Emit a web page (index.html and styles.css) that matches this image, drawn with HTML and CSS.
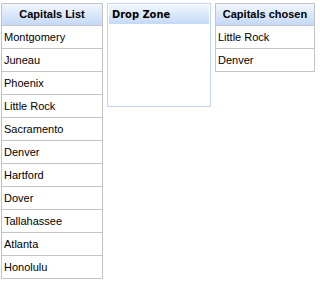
FILE: index.html
```html
<!DOCTYPE html>
<html>
<head>
<meta charset="utf-8">
<link rel="stylesheet" href="styles.css">
</head>
<body>
<div class="board">
  <div class="list list-source">
    <div class="list-head">Capitals List</div>
    <div class="item">Montgomery</div>
    <div class="item">Juneau</div>
    <div class="item">Phoenix</div>
    <div class="item">Little Rock</div>
    <div class="item">Sacramento</div>
    <div class="item">Denver</div>
    <div class="item">Hartford</div>
    <div class="item">Dover</div>
    <div class="item">Tallahassee</div>
    <div class="item">Atlanta</div>
    <div class="item">Honolulu</div>
  </div>
  <div class="dropzone">
    <div class="drop-head">Drop Zone</div>
  </div>
  <div class="list list-chosen">
    <div class="list-head">Capitals chosen</div>
    <div class="item">Little Rock</div>
    <div class="item">Denver</div>
  </div>
</div>
</body>
</html>
```

FILE: styles.css
```css
html, body {
  margin: 0;
  padding: 0;
  background: #ffffff;
}

body {
  font-family: "Liberation Sans", Arial, sans-serif;
  font-size: 11px;
  color: #000000;
}

.board {
  display: flex;
  align-items: flex-start;
  gap: 4px;
  padding: 3px 0 0 1px;
}

.list {
  border: 1px solid #c4c4c4;
  border-bottom: none;
  background: #ffffff;
}

.list-source {
  width: 100px;
}

.list-chosen {
  width: 98px;
}

.list-head {
  height: 21px;
  line-height: 21px;
  text-align: center;
  font-weight: bold;
  background: linear-gradient(#f1f6fe, #c4d9f7);
  border-bottom: 1px solid #c4c4c4;
}

.item {
  height: 22px;
  line-height: 22px;
  padding-left: 2px;
  border-bottom: 1px solid #c4c4c4;
  white-space: nowrap;
}

.dropzone {
  width: 100px;
  height: 100px;
  padding: 1px;
  border: 1px solid #c0d6f6;
  background: #ffffff;
}

.drop-head {
  height: 19px;
  line-height: 19px;
  padding-left: 3px;
  font-family: "DejaVu Sans Condensed", "DejaVu Sans", sans-serif;
  font-size: 11px;
  font-weight: bold;
  background: linear-gradient(#f1f6fe, #c4d9f7);
}
```
